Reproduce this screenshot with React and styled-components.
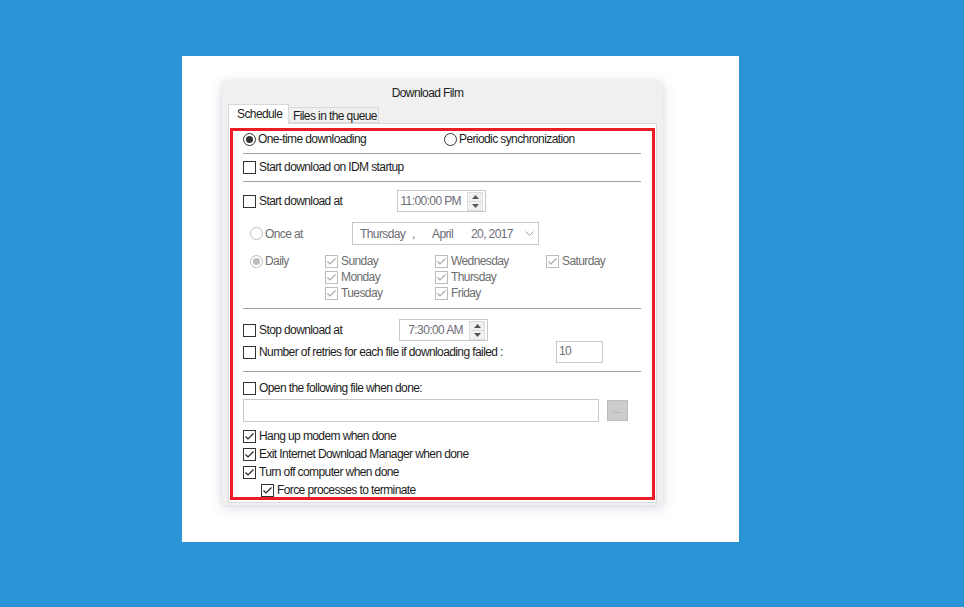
import { createGlobalStyle, styled } from "styled-components";

const GlobalStyle = createGlobalStyle`
  body {
    margin: 0;
    background: #2a94d6;
    font-family: "Liberation Sans", Arial, sans-serif;
    font-size: 12px;
    letter-spacing: -0.6px;
    color: #1c1c1c;
  }
`;

const Page = styled.div`
  min-height: 607px;
  padding: 56px 0 0 182px;
  box-sizing: border-box;
`;

const Card = styled.div`
  width: 557px;
  height: 486px;
  background: #fff;
  padding: 25px 0 0 40px;
  box-sizing: border-box;
`;

const Dialog = styled.div`
  width: 441px;
  height: 424px;
  background: #f0f0f0;
  border-radius: 4px;
  box-shadow: 0 3px 14px rgba(60, 70, 110, 0.18), 0 0 4px rgba(60, 70, 110, 0.08);
`;

const Title = styled.div`
  height: 23px;
  line-height: 25px;
  text-align: center;
  padding-right: 30px;
  color: #222;
`;

const Tabs = styled.div`
  display: flex;
  align-items: flex-end;
  height: 19px;
  padding-left: 6px;
`;

const Tab = styled.div`
  position: relative;
  box-sizing: border-box;
  height: ${(p) => (p.$active ? "20px" : "16px")};
  width: ${(p) => p.$w}px;
  padding-left: ${(p) => (p.$active ? 8 : 4)}px;
  line-height: ${(p) => (p.$active ? "18px" : "16px")};
  background: ${(p) => (p.$active ? "#fff" : "#f0f0f0")};
  border: 1px solid #d9d9d9;
  border-bottom: ${(p) => (p.$active ? "none" : "1px solid #d9d9d9")};
  border-left: ${(p) => (p.$active ? "1px solid #d9d9d9" : "none")};
  margin-bottom: ${(p) => (p.$active ? "-1px" : "0")};
  z-index: ${(p) => (p.$active ? 1 : 0)};
`;

const Panel = styled.div`
  width: 429px;
  height: 380px;
  margin-left: 6px;
  background: #fff;
  border: 1px solid #d9d9d9;
  box-sizing: border-box;
  padding: 4px 0 0 1px;
`;

const Frame = styled.div`
  width: 425px;
  height: 372px;
  border: 3px solid #ed1c24;
  box-sizing: border-box;
  padding: 0 11px 0 10px;
  display: flex;
  flex-direction: column;
`;

const Row = styled.div`
  display: flex;
  align-items: center;
  height: ${(p) => p.$h}px;
  margin-top: ${(p) => p.$mt || 0}px;
  padding-left: ${(p) => p.$indent || 0}px;
  flex-shrink: 0;
`;

const Sep = styled.div`
  height: 1px;
  background: #a0a0a0;
  margin-top: ${(p) => p.$mt}px;
  flex-shrink: 0;
`;

const Option = styled.label`
  display: flex;
  align-items: center;
  gap: ${(p) => p.$gap ?? 3}px;
  width: ${(p) => (p.$w ? `${p.$w}px` : "auto")};
  flex-shrink: 0;
  color: ${(p) => (p.$disabled ? "#6d6d6d" : "inherit")};
  white-space: nowrap;
`;

const Box = styled.span`
  width: 13px;
  height: 13px;
  box-sizing: border-box;
  border: 1px solid ${(p) => (p.$disabled ? "#bcbcbc" : "#333")};
  background: #fff;
  display: flex;
  align-items: center;
  justify-content: center;
  flex-shrink: 0;
`;

const Circle = styled(Box)`
  border-radius: 50%;
  &::after {
    content: "";
    display: ${(p) => (p.$on ? "block" : "none")};
    width: 7px;
    height: 7px;
    border-radius: 50%;
    background: ${(p) => (p.$disabled ? "#bcbcbc" : "#333")};
  }
`;

const Field = styled.div`
  display: flex;
  align-items: ${(p) => p.$align || "center"};
  width: ${(p) => p.$w}px;
  height: ${(p) => p.$h || 22}px;
  box-sizing: border-box;
  padding-left: ${(p) => p.$pl || 0}px;
  padding-top: ${(p) => p.$pt || 0}px;
  border: 1px solid #c8c8c8;
  background: #fff;
  color: #6d6d78;
  flex-shrink: 0;
`;

const TimeText = styled.span`
  flex: 1;
  text-align: right;
  padding-right: ${(p) => p.$pr}px;
`;

const Spin = styled.div`
  width: 16px;
  height: 19px;
  margin-right: 2px;
  display: flex;
  flex-direction: column;
  border: 1px solid #dcdcdc;
  box-sizing: border-box;
  background: #f0f0f0;
`;

const SpinHalf = styled.div`
  flex: 1;
  display: flex;
  align-items: center;
  justify-content: center;
  & + & {
    border-top: 1px solid #dcdcdc;
  }
`;

const DatePart = styled.span`
  width: ${(p) => (p.$w ? `${p.$w}px` : "auto")};
  flex: ${(p) => (p.$w ? "none" : 1)};
`;

const Days = styled.div`
  display: grid;
  grid-template-columns: 75px 110px 111px auto;
  grid-auto-rows: 16px;
  align-items: center;
  margin-top: 8px;
  padding-left: 7px;
  flex-shrink: 0;
`;

const Browse = styled.div`
  width: 21px;
  height: 21px;
  margin-left: 8px;
  box-sizing: border-box;
  border: 1px solid #bdbdbd;
  background: #cccccc;
  color: #a06cc0;
  font-size: 9px;
  display: flex;
  align-items: flex-end;
  justify-content: center;
  padding-bottom: 5px;
  letter-spacing: 0.5px;
`;

function Check({ on, disabled }) {
  return (
    <Box $disabled={disabled}>
      {on && (
        <svg width="11" height="11" viewBox="0 0 11 11">
          <polyline
            points="1.5,5.5 4,8 9.5,2.5"
            fill="none"
            stroke={disabled ? "#a8a8a8" : "#222"}
            strokeWidth="1.2"
          />
        </svg>
      )}
    </Box>
  );
}

function CheckOpt({ on, disabled, w, children }) {
  return (
    <Option $w={w} $disabled={disabled}>
      <Check on={on} disabled={disabled} />
      {children}
    </Option>
  );
}

function RadioOpt({ on, disabled, w, children }) {
  return (
    <Option $w={w} $disabled={disabled} $gap={2}>
      <Circle $on={on} $disabled={disabled} />
      {children}
    </Option>
  );
}

function TimeBox({ w, value, pr }) {
  return (
    <Field $w={w}>
      <TimeText $pr={pr}>{value}</TimeText>
      <Spin>
        <SpinHalf>
          <svg width="7" height="4" viewBox="0 0 7 4">
            <polygon points="0,4 3.5,0 7,4" fill="#555" />
          </svg>
        </SpinHalf>
        <SpinHalf>
          <svg width="7" height="4" viewBox="0 0 7 4">
            <polygon points="0,0 3.5,4 7,0" fill="#555" />
          </svg>
        </SpinHalf>
      </Spin>
    </Field>
  );
}

export default function App() {
  return (
    <>
      <GlobalStyle />
      <Page>
        <Card>
          <Dialog>
            <Title>Download Film</Title>
            <Tabs>
              <Tab $active $w={61}>Schedule</Tab>
              <Tab $w={90}>Files in the queue</Tab>
            </Tabs>
            <Panel>
              <Frame>
                <Row $h={16}>
                  <RadioOpt on w={201}>One-time downloading</RadioOpt>
                  <RadioOpt>Periodic synchronization</RadioOpt>
                </Row>
                <Sep $mt={6} />
                <Row $h={16} $mt={5}>
                  <CheckOpt>Start download on IDM startup</CheckOpt>
                </Row>
                <Sep $mt={6} />
                <Row $h={22} $mt={8}>
                  <CheckOpt w={154}>Start download at</CheckOpt>
                  <TimeBox w={89} value="11:00:00 PM" pr={6} />
                </Row>
                <Row $h={23} $mt={10} $indent={7}>
                  <RadioOpt disabled w={102}>Once at</RadioOpt>
                  <Field $w={187} $h={23} $pl={7}>
                    <DatePart $w={52}>Thursday</DatePart>
                    <DatePart $w={20}>,</DatePart>
                    <DatePart $w={39}>April</DatePart>
                    <DatePart>20, 2017</DatePart>
                    <svg width="9" height="6" viewBox="0 0 9 6" style={{ marginRight: 4 }}>
                      <polyline points="0.5,0.5 4.5,4.5 8.5,0.5" fill="none" stroke="#9a9a9a" />
                    </svg>
                  </Field>
                </Row>
                <Days>
                  <RadioOpt on disabled>Daily</RadioOpt>
                  <CheckOpt on disabled>Sunday</CheckOpt>
                  <CheckOpt on disabled>Wednesday</CheckOpt>
                  <CheckOpt on disabled>Saturday</CheckOpt>
                  <span />
                  <CheckOpt on disabled>Monday</CheckOpt>
                  <CheckOpt on disabled>Thursday</CheckOpt>
                  <span />
                  <span />
                  <CheckOpt on disabled>Tuesday</CheckOpt>
                  <CheckOpt on disabled>Friday</CheckOpt>
                </Days>
                <Sep $mt={7} />
                <Row $h={22} $mt={10}>
                  <CheckOpt w={156}>Stop download at</CheckOpt>
                  <TimeBox w={89} value="7:30:00 AM" pr={6} />
                </Row>
                <Row $h={22}>
                  <CheckOpt w={313}>Number of retries for each file if downloading failed :</CheckOpt>
                  <Field $w={47} $align="flex-start" $pl={2} $pt={2}>
                    10
                  </Field>
                </Row>
                <Sep $mt={8} />
                <Row $h={16} $mt={8}>
                  <CheckOpt>Open the following file when done:</CheckOpt>
                </Row>
                <Row $h={23} $mt={3}>
                  <Field $w={356} $h={23} />
                  <Browse>...</Browse>
                </Row>
                <Row $h={18} $mt={5}>
                  <CheckOpt on>Hang up modem when done</CheckOpt>
                </Row>
                <Row $h={18}>
                  <CheckOpt on>Exit Internet Download Manager when done</CheckOpt>
                </Row>
                <Row $h={18}>
                  <CheckOpt on>Turn off computer when done</CheckOpt>
                </Row>
                <Row $h={18} $indent={18}>
                  <CheckOpt on>Force processes to terminate</CheckOpt>
                </Row>
              </Frame>
            </Panel>
          </Dialog>
        </Card>
      </Page>
    </>
  );
}
